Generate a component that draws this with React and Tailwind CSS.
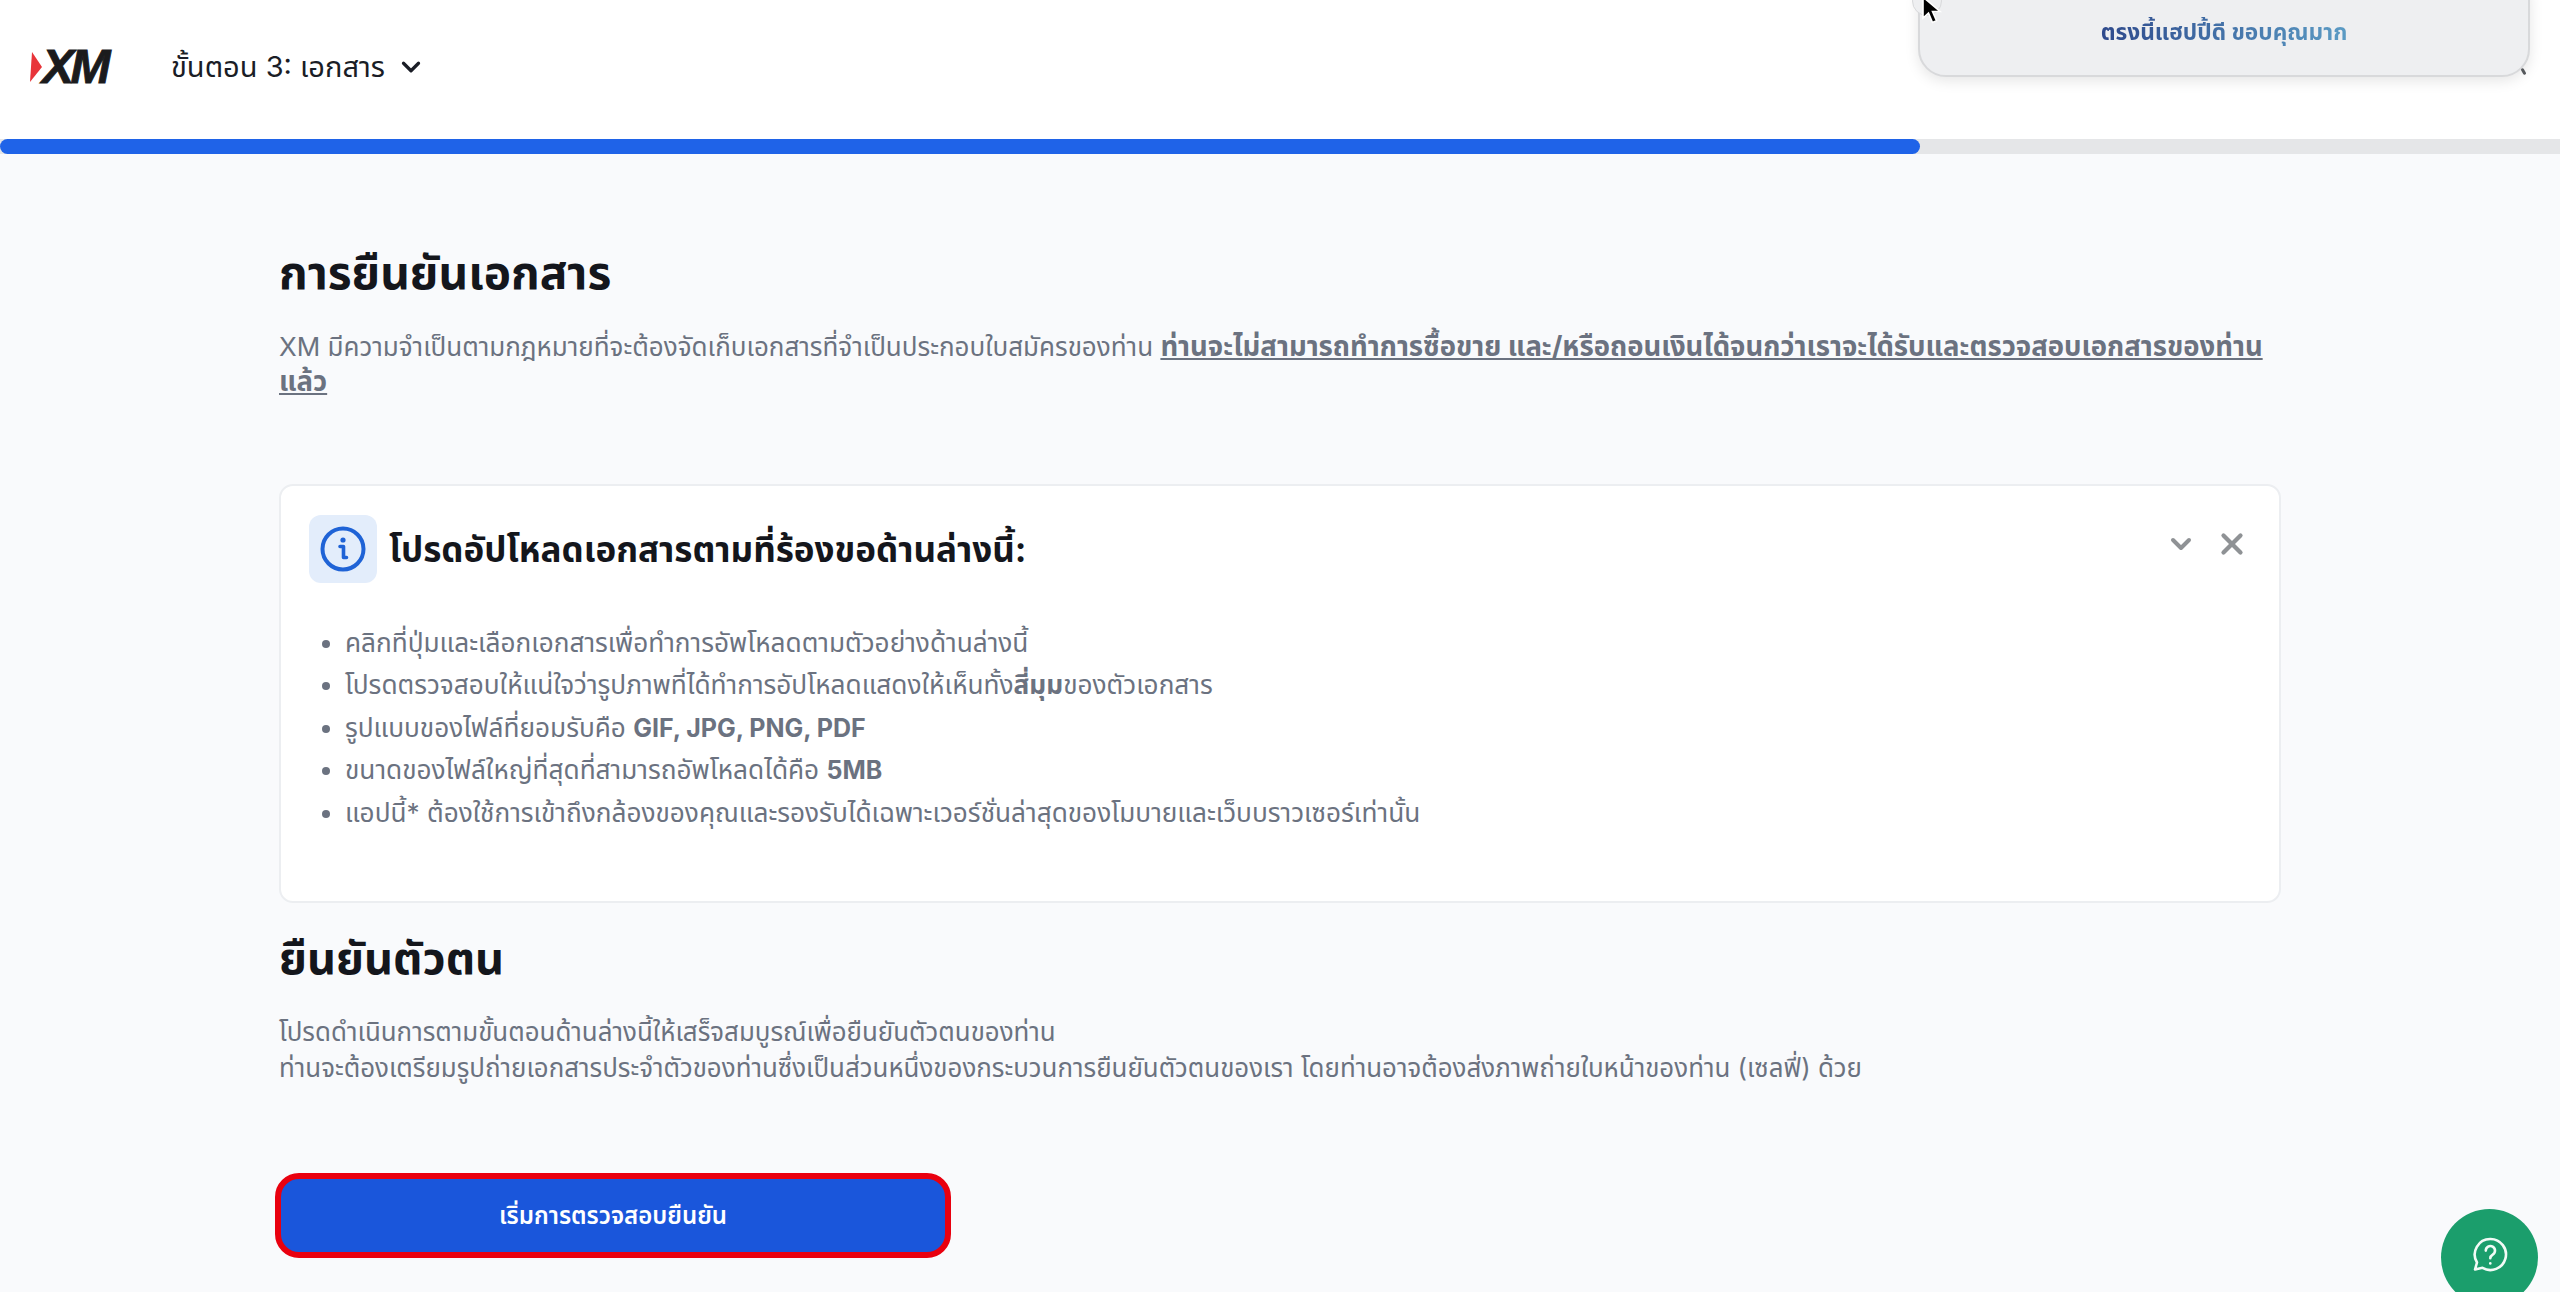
import { ChevronDown, X } from "lucide-react"

const THAI = "font-['Inter','Noto_Sans_Thai','Noto_Sans','Liberation_Sans',sans-serif]"

function InfoIcon() {
  return (
    <svg width="46" height="46" viewBox="0 0 46 46" fill="none">
      <circle cx="23" cy="23" r="20.5" stroke="#1f63d6" strokeWidth="4" />
      <circle cx="23" cy="14" r="2.6" fill="#1f63d6" />
      <path d="M20 20.5h3.5V31.5h3" stroke="#1f63d6" strokeWidth="3.6" strokeLinecap="round" strokeLinejoin="round" />
    </svg>
  )
}

function HelpIcon() {
  return (
    <svg width="38" height="38" viewBox="0 0 38 38" fill="none" stroke="#f2fbf6" strokeWidth="2.6" strokeLinecap="round" strokeLinejoin="round">
      <path d="M19.5 3a15.5 15.5 0 1 1-8 28.8L4 33.5l2-7A15.5 15.5 0 0 1 19.5 3z" />
      <path d="M14.8 14.6a4.6 4.6 0 1 1 6.9 4c-1.6 1-2.4 1.9-2.4 3.6" />
      <path d="M19.3 27.2v.2" />
    </svg>
  )
}

function Cursor() {
  return (
    <svg width="22" height="30" viewBox="0 0 22 30" className="absolute left-[1921px] top-[-4px]">
      <path d="M2 1v21l5.5-5 4 9.5 4-1.8-4-9.2H19z" fill="#000" stroke="#fff" strokeWidth="1.6" />
    </svg>
  )
}

const items = [
  <>คลิกที่ปุ่มและเลือกเอกสารเพื่อทำการอัพโหลดตามตัวอย่างด้านล่างนี้</>,
  <>โปรดตรวจสอบให้แน่ใจว่ารูปภาพที่ได้ทำการอัปโหลดแสดงให้เห็นทั้ง<b className="font-bold">สี่มุม</b>ของตัวเอกสาร</>,
  <>รูปแบบของไฟล์ที่ยอมรับคือ <b className="text-[25px] font-bold">GIF, JPG, PNG, PDF</b></>,
  <>ขนาดของไฟล์ใหญ่ที่สุดที่สามารถอัพโหลดได้คือ <b className="text-[25px] font-bold">5MB</b></>,
  <>แอปนี้* ต้องใช้การเข้าถึงกล้องของคุณและรองรับได้เฉพาะเวอร์ชั่นล่าสุดของโมบายและเว็บบราวเซอร์เท่านั้น</>,
]

export default function App() {
  return (
    <div className={`relative h-[1292px] overflow-hidden bg-[#f9fafc] ${THAI}`}>
      {/* header */}
      <header className="flex h-[139px] items-center bg-white pl-[30px] pb-[6px]">
        <div className="flex w-[141px] items-center">
          <svg width="13" height="30" viewBox="0 0 13 30">
            <path d="M2 0l10 15L0 30z" fill="#e8343a" />
          </svg>
          <span className="ml-[-1px] font-['Liberation_Sans',sans-serif] text-[48px] leading-none font-bold tracking-[-3.5px] text-[#1b1b1d] italic [-webkit-text-stroke:1px_#1b1b1d]">XM</span>
        </div>
        <span className="text-[29px] leading-none text-[#1a1d26]">ขั้นตอน 3: เอกสาร</span>
        <ChevronDown className="ml-[11px] text-[#1a1d26]" size={30} strokeWidth={2.6} />
      </header>

      {/* progress */}
      <div className="h-[15px] bg-[#e5e6e8]">
        <div className="h-full w-[1920px] rounded-full bg-[#1f63e8]" />
      </div>

      <main className="ml-[279px] w-[2002px]">
        <h1 className="mt-[93px] text-[46px] leading-[50px] font-bold text-[#14161c]">การยืนยันเอกสาร</h1>
        <p className="mt-[32px] text-[26px] leading-[35px] text-[#6b7280]">
          XM มีความจำเป็นตามกฎหมายที่จะต้องจัดเก็บเอกสารที่จำเป็นประกอบใบสมัครของท่าน{" "}
          <b className="text-[27.5px] font-bold underline">ท่านจะไม่สามารถทำการซื้อขาย และ/หรือถอนเงินได้จนกว่าเราจะได้รับและตรวจสอบเอกสารของท่านแล้ว</b>
        </p>

        {/* info card */}
        <section className="mt-[85px] h-[419px] rounded-[14px] border-2 border-[#eceef1] bg-white pt-[29px] pr-[30px] pl-[28px]">
          <div className="flex items-start">
            <div className="flex h-[68px] w-[68px] items-center justify-center rounded-[12px] bg-[#e3edfb]">
              <InfoIcon />
            </div>
            <h2 className="ml-[12px] flex h-[68px] items-center text-[35px] font-bold text-[#14161c]">โปรดอัปโหลดเอกสารตามที่ร้องขอด้านล่างนี้:</h2>
            <div className="ml-auto flex items-center gap-[18px] pt-[12px] text-[#8f9295]">
              <ChevronDown size={32} strokeWidth={3} />
              <X size={34} strokeWidth={3} />
            </div>
          </div>
          <ul className="mt-[39px] list-disc pl-[36px] text-[26.2px] leading-[42.4px] text-[#6b7280]">
            {items.map((item, i) => (
              <li key={i}>{item}</li>
            ))}
          </ul>
        </section>

        <h1 className="mt-[30px] text-[45px] leading-[50px] font-bold text-[#14161c]">ยืนยันตัวตน</h1>
        <p className="mt-[31px] text-[25.9px] leading-[36px] text-[#6b7280]">
          โปรดดำเนินการตามขั้นตอนด้านล่างนี้ให้เสร็จสมบูรณ์เพื่อยืนยันตัวตนของท่าน
          <br />
          ท่านจะต้องเตรียมรูปถ่ายเอกสารประจำตัวของท่านซึ่งเป็นส่วนหนึ่งของกระบวนการยืนยันตัวตนของเรา โดยท่านอาจต้องส่งภาพถ่ายใบหน้าของท่าน (เซลฟี่) ด้วย
        </p>

        <button className="mt-[87px] ml-[-4px] flex h-[85px] w-[676px] items-center justify-center rounded-[24px] border-[6px] border-[#e9000f] bg-[#1a56db] text-[24px] font-semibold text-white">
          เริ่มการตรวจสอบยืนยัน
        </button>
      </main>

      {/* feedback toast over the header */}
      <div className="absolute top-[-30px] left-[1918px] flex h-[107px] w-[612px] items-end justify-center rounded-[28px] border-2 border-[#d8d9db] bg-[#eeeff1] pb-[28px] shadow-[0_4px_14px_rgba(0,0,0,0.10)]">
        <span className="bg-gradient-to-r from-[#2f4a8c] to-[#5b9bc4] bg-clip-text text-[22.7px] leading-[30px] font-bold text-transparent">ตรงนี้แฮปปี้ดี ขอบคุณมาก</span>
      </div>
      <div className="absolute top-[-14px] left-[1912px] h-[30px] w-[30px] rounded-full border border-[#d8d9db] bg-[#eeeff1]" />
      <div className="absolute top-[68px] left-[2522px] h-[7px] w-[3px] -rotate-30 rounded-full bg-[#55585c]" />
      <Cursor />

      {/* help button */}
      <button className="absolute top-[1209px] left-[2441px] flex h-[97px] w-[97px] items-start justify-center rounded-full bg-[#1b9e6c] pt-[27px]">
        <HelpIcon />
      </button>
    </div>
  )
}
